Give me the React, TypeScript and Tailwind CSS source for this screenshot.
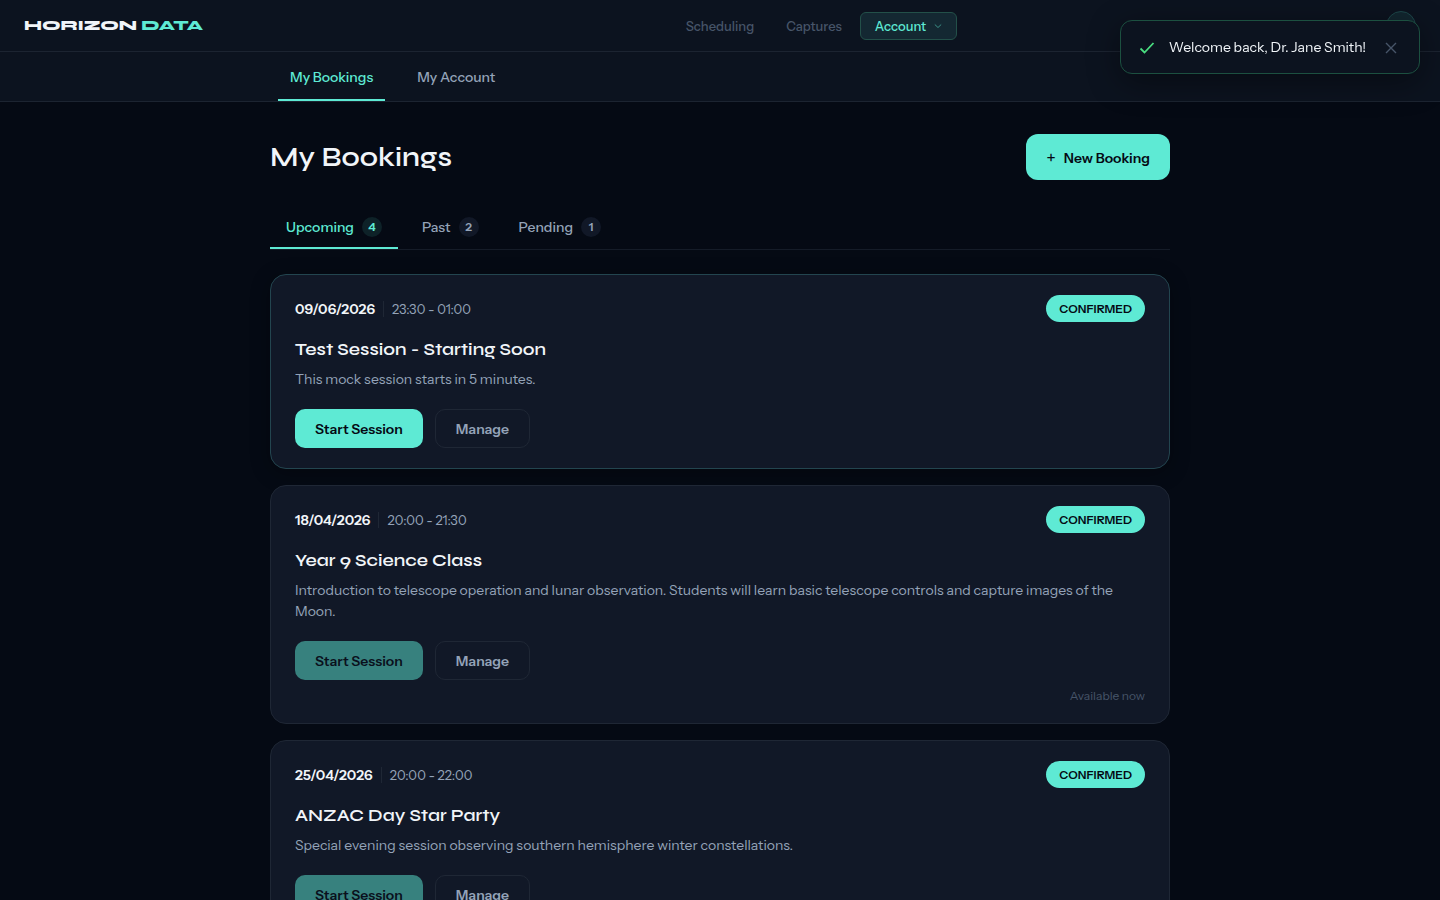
import { useState } from "react";

type Booking = {
  date: string;
  time: string;
  title: string;
  text: string;
  active?: boolean;
  note?: string;
};

const bookings: Booking[] = [
  {
    date: "09/06/2026",
    time: "23:30 - 01:00",
    title: "Test Session - Starting Soon",
    text: "This mock session starts in 5 minutes.",
    active: true,
  },
  {
    date: "18/04/2026",
    time: "20:00 - 21:30",
    title: "Year 9 Science Class",
    text: "Introduction to telescope operation and lunar observation. Students will learn basic telescope controls and capture images of the Moon.",
    note: "Available now",
  },
  {
    date: "25/04/2026",
    time: "20:00 - 22:00",
    title: "ANZAC Day Star Party",
    text: "Special evening session observing southern hemisphere winter constellations.",
    note: "Available now",
  },
];

const tabs = [
  { label: "Upcoming", count: 4 },
  { label: "Past", count: 2 },
  { label: "Pending", count: 1 },
];

function BookingCard({ booking }: { booking: Booking }) {
  return (
    <article
      className={`flex flex-col rounded-2xl border bg-[#111827] px-6 py-5 ${
        booking.active
          ? "border-[#23454f] shadow-[0_4px_20px_rgba(0,0,0,0.3)]"
          : "border-[#1f2735]"
      }`}
    >
      <div className="flex items-center justify-between">
        <div className="flex items-center leading-5">
          <time className="text-[14px] font-semibold text-[#f1f5f9]">{booking.date}</time>
          <span className="mx-2 h-4 w-px bg-[#1f2735]" />
          <span className="text-[13px] text-[#94a3b8]">{booking.time}</span>
        </div>
        <span className="rounded-full bg-[#5eead4] px-[13px] text-[12px] leading-[27px] font-semibold text-[#050a14]">
          CONFIRMED
        </span>
      </div>
      <h2 className="mt-4 font-['Syne','DejaVu_Sans',sans-serif] text-[18px] leading-[22px] font-semibold text-[#f1f5f9]">
        {booking.title}
      </h2>
      <p className="mt-[9px] text-[14px] leading-[21px] text-[#94a3b8]">{booking.text}</p>
      <div className="mt-[19px] flex gap-3">
        <button
          type="button"
          disabled={!booking.active}
          className="rounded-[10px] bg-[#5eead4] px-5 pt-[10px] pb-2 text-[14px] leading-[21px] font-semibold text-[#050a14] disabled:opacity-50"
        >
          Start Session
        </button>
        <button
          type="button"
          className="rounded-[10px] border border-[#1f2735] px-5 pt-[9px] pb-[7px] text-[14px] leading-[21px] font-semibold text-[#94a3b8]"
        >
          Manage
        </button>
      </div>
      {booking.note && (
        <p className="mt-2 text-right text-[12px] leading-[15px] text-[#475569]">{booking.note}</p>
      )}
    </article>
  );
}

export default function App() {
  const [tab, setTab] = useState("Upcoming");
  const [toast, setToast] = useState(true);

  return (
    <div className="min-h-screen bg-[#050a14] pb-8 font-['Instrument_Sans','Inter',sans-serif] text-[#f1f5f9]">
      <header className="grid h-[52px] grid-cols-[24fr_auto_17fr] items-center border-b border-[#1c2431] bg-[#0c131f] px-6">
        <a href="#home" className="font-['Syne','DejaVu_Sans',sans-serif] text-[14px] leading-[17px] font-extrabold">
          HORIZON <span className="text-[#5eead4]">DATA</span>
        </a>
        <nav className="flex items-center gap-1 text-[13px] leading-5 font-medium" aria-label="Main">
          <a href="#scheduling" className="px-[14px] text-[#475569]">Scheduling</a>
          <a href="#captures" className="px-[14px] text-[#475569]">Captures</a>
          <button
            type="button"
            className="flex h-7 items-center gap-2 rounded-md border border-[#235049] bg-[#142832] px-[14px] font-medium text-[#5eead4]"
          >
            Account
            <svg className="size-2" viewBox="0 0 8 8" fill="none" stroke="#3b8f86" aria-hidden="true">
              <path d="M.8 2.5 4 5.5 7.2 2.5" />
            </svg>
          </button>
        </nav>
        <button
          type="button"
          aria-label="Profile"
          className="size-[30px] justify-self-end rounded-full border border-[#1d474a] bg-[#12262f]"
        />
      </header>

      <nav className="border-b border-[#1c2431] bg-[#0c131f]" aria-label="Account">
        <div className="mx-auto flex w-full max-w-[884px] gap-5 text-[14px] leading-[21px] font-medium">
          <a href="#bookings" className="border-b-2 border-[#5eead4] px-3 pt-[15px] pb-[11px] text-[#5eead4]">
            My Bookings
          </a>
          <a href="#account" className="border-b-2 border-transparent px-3 pt-[15px] pb-[11px] text-[#94a3b8]">
            My Account
          </a>
        </div>
      </nav>

      <main className="mx-auto w-full max-w-[900px] pt-8">
        <div className="flex items-center justify-between">
          <h1 className="font-['Syne','DejaVu_Sans',sans-serif] text-[28px] leading-[34px] font-semibold">My Bookings</h1>
          <button
            type="button"
            className="flex items-center gap-2 rounded-xl bg-[#5eead4] px-5 pt-[14px] pb-[11px] text-[14px] leading-[21px] font-semibold text-[#050a14]"
          >
            <span className="text-[18px] font-normal" aria-hidden="true">+</span>
            New Booking
          </button>
        </div>

        <div className="mt-6 flex gap-2 border-b border-[#151c28]" role="tablist">
          {tabs.map((item) => (
            <button
              key={item.label}
              type="button"
              role="tab"
              aria-selected={tab === item.label}
              onClick={() => setTab(item.label)}
              className={`flex items-center gap-2 border-b-2 px-4 pt-3 pb-[9px] text-[14px] leading-[22px] font-medium ${
                tab === item.label
                  ? "border-[#5eead4] text-[#5eead4]"
                  : "border-transparent text-[#94a3b8]"
              }`}
            >
              {item.label}
              <span
                className={`flex size-5 items-center justify-center rounded-full text-[12px] font-semibold ${
                  tab === item.label ? "bg-[#0e2228]" : "bg-[#111827]"
                }`}
              >
                {item.count}
              </span>
            </button>
          ))}
        </div>

        <section className="mt-6 flex flex-col gap-4">
          {bookings.map((booking) => (
            <BookingCard key={booking.date} booking={booking} />
          ))}
        </section>
      </main>

      {toast && (
        <div
          role="status"
          className="fixed top-5 right-5 flex items-center rounded-xl border border-[#1c5040] bg-[#0c131f] px-[18px] pt-4 pb-[15px] shadow-[0_8px_32px_rgba(0,0,0,0.4)]"
        >
          <svg className="size-4 shrink-0" viewBox="0 0 16 16" fill="none" stroke="#4ade80" strokeWidth="1.8" aria-hidden="true">
            <path d="m1.5 8.5 4 4L14.5 3" />
          </svg>
          <span className="ml-[14px] flex-1 text-[14px] leading-[21px] whitespace-nowrap">Welcome back, Dr. Jane Smith!</span>
          <button type="button" aria-label="Dismiss" onClick={() => setToast(false)} className="ml-[15px] p-1">
            <svg className="size-3" viewBox="0 0 12 12" fill="none" stroke="#475569" strokeWidth="1.4" aria-hidden="true">
              <path d="m1 1 10 10M11 1 1 11" />
            </svg>
          </button>
        </div>
      )}
    </div>
  );
}
